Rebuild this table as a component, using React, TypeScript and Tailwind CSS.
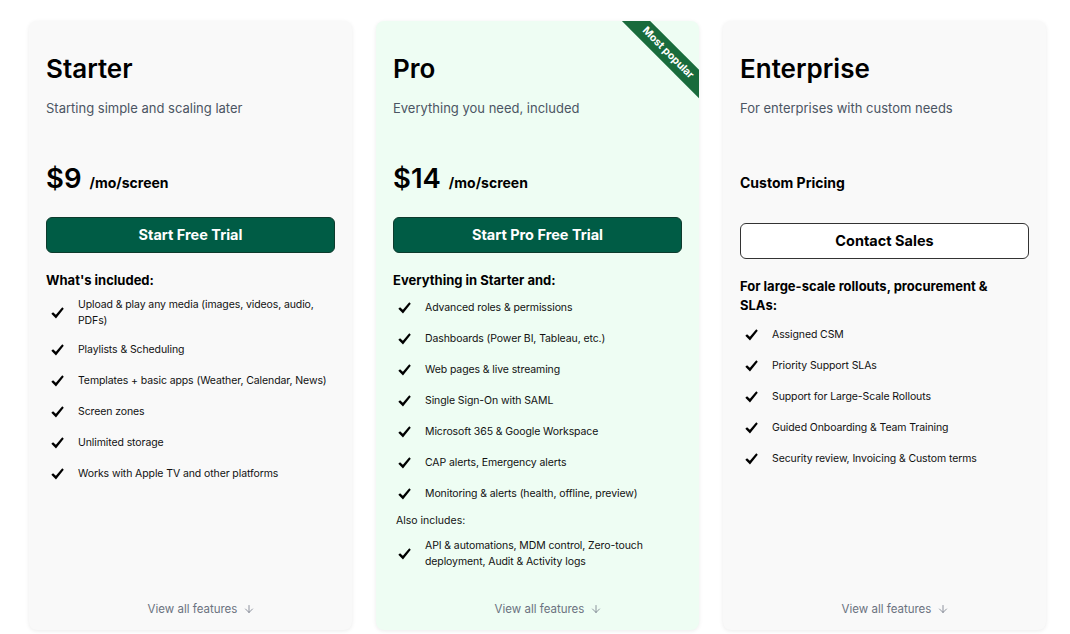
import { ArrowDown } from "lucide-react"

type Plan = {
  name: string
  tagline: string
  price?: string
  cta: string
  heading: string
  features: string[]
  extras?: string[]
  popular?: boolean
}

const plans: Plan[] = [
  {
    name: "Starter",
    tagline: "Starting simple and scaling later",
    price: "$9",
    cta: "Start Free Trial",
    heading: "What's included:",
    features: [
      "Upload & play any media (images, videos, audio, PDFs)",
      "Playlists & Scheduling",
      "Templates + basic apps (Weather, Calendar, News)",
      "Screen zones",
      "Unlimited storage",
      "Works with Apple TV and other platforms",
    ],
  },
  {
    name: "Pro",
    tagline: "Everything you need, included",
    price: "$14",
    cta: "Start Pro Free Trial",
    heading: "Everything in Starter and:",
    popular: true,
    features: [
      "Advanced roles & permissions",
      "Dashboards (Power BI, Tableau, etc.)",
      "Web pages & live streaming",
      "Single Sign-On with SAML",
      "Microsoft 365 & Google Workspace",
      "CAP alerts, Emergency alerts",
      "Monitoring & alerts (health, offline, preview)",
    ],
    extras: ["API & automations, MDM control, Zero-touch deployment, Audit & Activity logs"],
  },
  {
    name: "Enterprise",
    tagline: "For enterprises with custom needs",
    cta: "Contact Sales",
    heading: "For large-scale rollouts, procurement & SLAs:",
    features: [
      "Assigned CSM",
      "Priority Support SLAs",
      "Support for Large-Scale Rollouts",
      "Guided Onboarding & Team Training",
      "Security review, Invoicing & Custom terms",
    ],
  },
]

function Check() {
  return (
    <svg width="13" height="12" viewBox="0 0 12 11" className="ml-[5px] shrink-0">
      <path d="M0.3 6.2 L1.9 4.7 L4.5 7.2 L10.4 0.3 L11.8 1.6 L4.6 10.5 Z" fill="#000" />
    </svg>
  )
}

function Feature({ text }: { text: string }) {
  return (
    <li className="flex items-center min-h-[21px]">
      <span className="w-[32px] flex shrink-0">
        <Check />
      </span>
      <span className="text-[10.5px] leading-4 tracking-[-0.1px] text-[#111]">{text}</span>
    </li>
  )
}

function PlanCard({ plan }: { plan: Plan }) {
  const enterprise = !plan.price
  return (
    <div
      className={`relative overflow-hidden flex flex-col h-[609px] rounded-lg px-[17px] pt-[32px] shadow-[0_1px_4px_rgba(0,0,0,0.08)] ${
        plan.popular ? "bg-[#eefdf3]" : "bg-[#f9f9f9]"
      }`}
    >
      {plan.popular && (
        <div className="absolute top-[22px] right-[-29px] w-[120px] h-[20px] rotate-45 bg-[#196b3c] flex items-center justify-center">
          <span className="text-[10.5px] font-bold text-white leading-none">Most popular</span>
        </div>
      )}

      <h2 className="text-[26px] leading-8 font-semibold text-black">{plan.name}</h2>
      <p className="mt-[13px] text-[13px] leading-5 text-[#4b5563]">{plan.tagline}</p>

      {enterprise ? (
        <div className="mt-[43px] h-[34px] pt-[12px] text-[14px] leading-5 font-bold text-black">
          Custom Pricing
        </div>
      ) : (
        <div className="mt-[43px] h-[34px] flex items-baseline gap-2">
          <span className="text-[27.5px] leading-[34px] font-semibold text-black">{plan.price}</span>
          <span className="text-[14px] leading-5 font-bold text-black">/mo/screen</span>
        </div>
      )}

      {enterprise ? (
        <button className="mt-[28px] h-[36px] rounded-md border border-[#333] bg-white text-[14.5px] font-bold text-black">
          {plan.cta}
        </button>
      ) : (
        <button className="mt-[22px] h-[36px] rounded-md border border-[#0d3b2d] bg-[#005c45] text-[14.5px] font-bold text-white">
          {plan.cta}
        </button>
      )}

      <h3
        className={`text-[13px] font-bold text-black ${
          enterprise ? "mt-[18px] leading-[19px] max-w-[262px]" : "mt-[17px] leading-5"
        }`}
      >
        {plan.heading}
      </h3>

      <ul className={`${enterprise ? "mt-[9px]" : "mt-[7px]"} flex flex-col gap-[10px]`}>
        {plan.features.map((f) => (
          <Feature key={f} text={f} />
        ))}
      </ul>

      {plan.extras && (
        <>
          <div className="mt-[9px] ml-[3px] text-[10.5px] leading-4 text-[#111]">Also includes:</div>
          <ul className="mt-[9px] flex flex-col gap-[10px]">
            {plan.extras.map((f) => (
              <Feature key={f} text={f} />
            ))}
          </ul>
        </>
      )}

      <div className="mt-auto pb-[13px] pl-[22px] flex items-center justify-center gap-[6px] text-[11.5px] leading-4 text-[#6b7280]">
        <span>View all features</span>
        <ArrowDown size={12} strokeWidth={1.5} />
      </div>
    </div>
  )
}

export default function App() {
  return (
    <div className="w-[1070px] h-[634px] overflow-hidden bg-white pt-[21px] pl-[29px] font-['Inter',sans-serif]">
      <div className="grid grid-cols-[323px_323px_323px] gap-6">
        {plans.map((p) => (
          <PlanCard key={p.name} plan={p} />
        ))}
      </div>
    </div>
  )
}
